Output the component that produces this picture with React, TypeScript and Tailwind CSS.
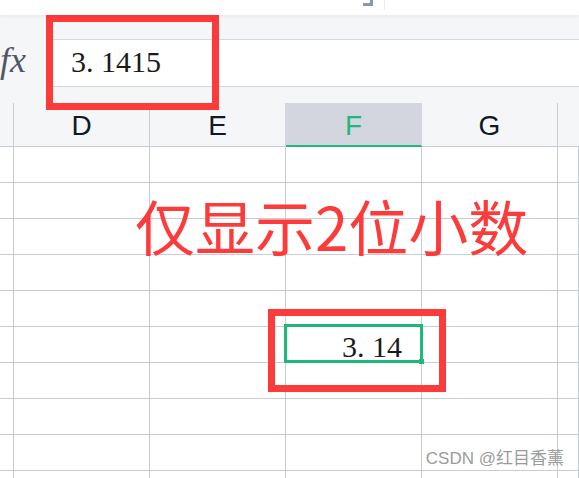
import React from "react";

const GRID = "grid grid-cols-[14px_136px_136px_136px_136px_1fr]";
const LINE = "border-[#c8ccd9]";

export default function App() {
  const rows = Array.from({ length: 10 }, (_, i) => i);
  const cols = [0, 1, 2, 3, 4, 5];
  return (
    <div className="relative w-[579px] h-[478px] overflow-hidden bg-white" style={{ fontFamily: '"Liberation Sans", "Noto Sans CJK SC", sans-serif' }}>
      {/* top toolbar strip */}
      <div className="relative z-10 h-[15px] bg-white shadow-[0_1px_4px_rgba(0,0,0,0.07)]">
        <div className="absolute left-[363px] top-[-4px] h-[10px] w-[10px] border-r-[3px] border-b-[3px] border-[#8c95aa]" />
        <div className="absolute left-[384px] top-0 h-[10px] w-px bg-[#ececec]" />
      </div>

      {/* formula bar */}
      <div className="h-[88px] bg-[#f5f6f8] pt-[24px]">
        <div className="flex h-[48px]">
          <div className="w-[47px]">
            <span
              className="block pt-[3px] text-[36px] italic leading-none text-[#50576a]"
              style={{ fontFamily: '"Liberation Serif", serif' }}
            >
              fx
            </span>
          </div>
          <div className="flex-1 border-y border-[#d3d6dc] bg-white pl-[24px] pt-[7px]">
            <span className="block text-[30px] leading-none text-[#1a1a1a]" style={{ fontFamily: '"Liberation Serif", serif' }}>
              3. 1415
            </span>
          </div>
        </div>
      </div>

      {/* column header */}
      <div className={`${GRID} h-[44px] bg-[#f5f6f8]`}>
        <div className={`border-r border-b ${LINE}`} />
        <div className={`flex justify-center border-r border-b ${LINE} pt-[9px] text-[28px] leading-none text-[#111827]`}>D</div>
        <div className="flex justify-center border-r border-b border-b-[#c8ccd9] border-r-[#d3d6de] pt-[9px] text-[28px] leading-none text-[#111827]">E</div>
        <div className="flex justify-center border-b-2 border-r border-b-[#1fb87a] border-r-[#d3d6de] bg-[#d3d6de] pt-[9px] text-[28px] leading-none text-[#1fb87a]">F</div>
        <div className={`flex justify-center border-r border-b ${LINE} pt-[9px] text-[28px] leading-none text-[#111827]`}>G</div>
        <div className={`border-b ${LINE}`} />
      </div>

      {/* cells */}
      {rows.map((r) => (
        <div key={r} className={GRID}>
          {cols.map((c) => (
            <div key={c} className={`h-[36px] border-r border-b ${LINE} bg-white`}>
              {r === 5 && c === 3 ? (
                <div className="flex justify-end pr-[19px] pt-[5px]">
                  <span className="text-[30px] leading-none text-[#1a1a1a]" style={{ fontFamily: '"Liberation Serif", serif' }}>
                    3. 14
                  </span>
                </div>
              ) : null}
            </div>
          ))}
        </div>
      ))}

      {/* selection */}
      <div className="absolute left-[284px] top-[324px] h-[39px] w-[139px] border-[3px] border-[#1fb87a]" />
      <div className="absolute left-[419px] top-[359px] h-[5px] w-[5px] bg-[#1fb87a]" />

      {/* annotations */}
      <div className="absolute left-[46px] top-[15px] h-[95px] w-[173px] border-[7px] border-[#fe3b3b]" />
      <div className="absolute left-[268px] top-[309px] h-[83px] w-[178px] border-[7px] border-[#fe3b3b]" />
      <div
        className="absolute left-[135px] top-[195px] whitespace-nowrap text-[60px] font-normal leading-none text-[#fe3b3b]"
        style={{ fontFamily: '"Noto Sans CJK SC", "Noto Sans", sans-serif' }}
      >
        仅显示2位小数
      </div>

      {/* watermark */}
      <div
        className="absolute right-[15px] top-[450px] whitespace-nowrap text-[17px] leading-none text-[#9b9b9b]"
        style={{ fontFamily: '"Liberation Sans", "Noto Sans CJK SC", sans-serif' }}
      >
        CSDN @红目香薰
      </div>
    </div>
  );
}
